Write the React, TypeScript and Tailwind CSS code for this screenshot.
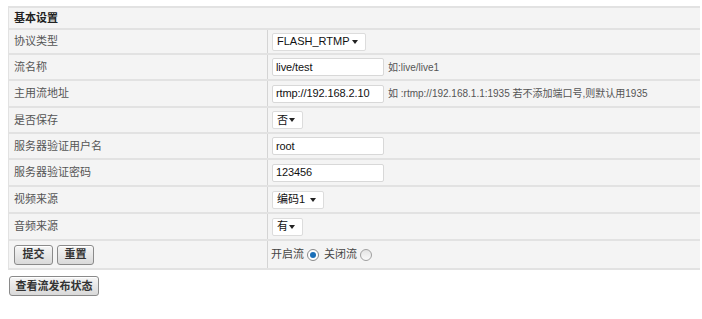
import React from 'react';

const font = { fontFamily: '"Liberation Sans", "Noto Sans CJK SC", sans-serif' };

const Select: React.FC<{ value: string; w: string }> = ({ value, w }) => (
  <div className={`flex shrink-0 items-center justify-between h-[18px] bg-white border border-[#dcdcdc] rounded-[2px] pl-[4px] pr-[7px] text-[11px] text-[#111] ${w}`}>
    <span>{value}</span>
    <span className="w-0 h-0 border-l-[3px] border-r-[3px] border-t-[4px] border-l-transparent border-r-transparent border-t-[#222]" />
  </div>
);

const Input: React.FC<{ value: string }> = ({ value }) => (
  <div className="flex shrink-0 items-center h-[18px] w-[112px] bg-white border border-[#d8d8d8] rounded-[2px] px-[3px] text-[11px] tracking-[-0.1px] text-[#111]">
    {value}
  </div>
);

const Row: React.FC<{ label: string; h: string; children: React.ReactNode }> = ({ label, h, children }) => (
  <div className={`flex border-b-2 border-[#e2e2e2] ${h}`}>
    <div className="w-[259px] shrink-0 border-r border-[#d4d4d4] flex items-center pl-[5px] text-[11px] text-[#555]">
      {label}
    </div>
    <div className="flex-1 flex items-center pl-[4px] gap-[3px]">{children}</div>
  </div>
);

const Hint: React.FC<{ children: React.ReactNode }> = ({ children }) => (
  <span className="text-[10px] text-[#555] ml-[1px] whitespace-nowrap">{children}</span>
);

const Btn: React.FC<{ children: React.ReactNode; w: string }> = ({ children, w }) => (
  <button className={`h-[20px] ${w} flex items-center justify-center border border-[#8a8a8a] rounded-[3px] bg-gradient-to-b from-[#f6f6f6] to-[#d9d9d9] text-[11px] font-bold text-[#333] shadow-[inset_0_1px_0_#fff]`}>
    {children}
  </button>
);

export default function App() {
  return (
    <div className="w-[702px] h-[319px] bg-white pt-[6px]" style={font}>
      <div className="ml-[8px] w-[692px] bg-[#f4f4f4] border-t-2 border-l border-[#e2e2e2]">
        <div className="h-[22px] flex items-center pl-[5px] border-b-2 border-[#e2e2e2] text-[11px] font-bold text-[#222]">
          基本设置
        </div>
        <Row label="协议类型" h="h-[25px]">
          <Select value="FLASH_RTMP" w="w-[94px]" />
        </Row>
        <Row label="流名称" h="h-[26px]">
          <Input value="live/test" />
          <Hint>如:live/live1</Hint>
        </Row>
        <Row label="主用流地址" h="h-[27px]">
          <Input value="rtmp://192.168.2.10" />
          <Hint>如 :rtmp://192.168.1.1:1935 若不添加端口号,则默认用1935</Hint>
        </Row>
        <Row label="是否保存" h="h-[26px]">
          <Select value="否" w="w-[31px]" />
        </Row>
        <Row label="服务器验证用户名" h="h-[26px]">
          <Input value="root" />
        </Row>
        <Row label="服务器验证密码" h="h-[27px]">
          <Input value="123456" />
        </Row>
        <Row label="视频来源" h="h-[27px]">
          <Select value="编码1" w="w-[52px]" />
        </Row>
        <Row label="音频来源" h="h-[27px]">
          <Select value="有" w="w-[31px]" />
        </Row>
        <div className="flex h-[29px] border-b-2 border-[#e2e2e2]">
          <div className="w-[259px] shrink-0 border-r border-[#d4d4d4] flex items-center pl-[5px] gap-[4px]">
            <Btn w="w-[39px]">提交</Btn>
            <Btn w="w-[37px]">重置</Btn>
          </div>
          <div className="flex-1 flex items-center pl-[3px] text-[11px] text-[#444]">
            <span>开启流</span>
            <span className="ml-[3px] w-[12px] h-[12px] rounded-full border border-[#8a8a8a] bg-white flex items-center justify-center">
              <span className="w-[6px] h-[6px] rounded-full bg-[#1b6fb8]" />
            </span>
            <span className="ml-[5px]">关闭流</span>
            <span className="ml-[3px] w-[12px] h-[12px] rounded-full border border-[#a0a0a0] bg-gradient-to-b from-[#e4e4e4] to-[#fafafa]" />
          </div>
        </div>
      </div>
      <div className="ml-[9px] mt-[6px]">
        <Btn w="w-[90px]">查看流发布状态</Btn>
      </div>
    </div>
  );
}
